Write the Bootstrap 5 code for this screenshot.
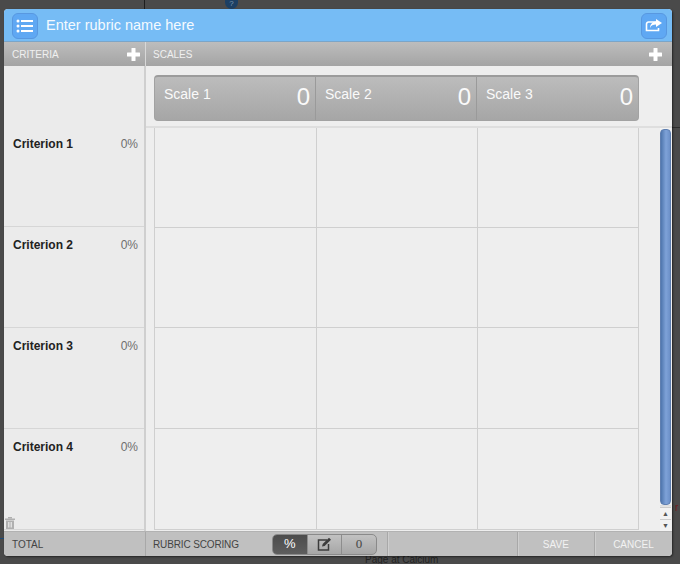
<!DOCTYPE html>
<html lang="en">
<head>
<meta charset="utf-8">
<title>Rubric</title>
<link href="https://cdn.jsdelivr.net/npm/bootstrap@5.3.0/dist/css/bootstrap.min.css" rel="stylesheet">
<style>
html,body{height:564px;overflow:hidden}
body{background:#4a4a4a;font-family:"Liberation Sans",Arial,sans-serif;position:relative}
.bgq{position:absolute;left:225px;top:0;width:13px;height:9px;border-radius:0 0 7px 7px;background:#1c3f63;color:#7f98b0;font-size:8px;line-height:8px;text-align:center}
.bgline{position:absolute;left:144px;top:0;width:1px;height:9px;background:#1e1e1e}
.bgline2{position:absolute;left:672px;top:127px;width:8px;height:1px;background:#2c2c2c}
.bgtxt{position:absolute;left:365px;top:554px;font-size:10px;color:#222;line-height:12px}
.bgred{position:absolute;left:675px;top:500px;font-size:10px;color:#6e1a1a}
.bgblue{position:absolute;left:0;top:538px;width:4px;height:1px;background:#1c4a78}
.dlg{position:relative;width:668px;height:547px;margin:9px 0 0 4px;border-radius:4px;overflow:hidden;background:#eee;box-shadow:1px 1px 2px rgba(0,0,0,.5)}
.topbar{height:33px;background:#76bcf5;padding:1px 5px 0 8px;color:#fff;border-bottom:1px solid #7ba5c8}
.ttl{font-size:14.5px;margin-left:8px;padding-top:1px;color:#f4faff}
.icbtn{width:26px;height:26px;border-radius:6px;background:#5fa8f3;border:1px solid #5898e0}
.hdrs{height:24px;background:linear-gradient(#bdbdbd,#a4a4a4);color:#f0f0f0;font-size:10px}
.leftw{width:142px;flex:none}
.seph{border-right:1px solid #d8d8d8}
.hl{padding:0 5px 0 8px}
.hr{padding:0 10px 0 7px}
.cols{height:465px;background:#eee}
.crit{background:#ebebeb;border-right:2px solid #cfcfcf;width:142px;flex:none;position:relative;display:grid;grid-template-rows:61px 100px 101px 101px 101px;align-content:start}
.critrow{border-bottom:1px solid #d6d6d6;padding:11px 6px 0 9px;font-size:12px;line-height:14px}
.critrow.firstrow{padding-top:10px}
.critrow b{color:#222;font-weight:700}
.critrow span{color:#6e6e6e}
.trash{position:absolute;left:1px;top:451px}
.mainp{flex:1;position:relative;min-width:0}
.scalearea{height:62px;padding:9px 0 0 8px;border-bottom:2px solid #dedede}
.scalebar{width:485px;height:46px;border-radius:4px;background:linear-gradient(#bcbcbc,#a6a6a6);border:1px solid #a2a2a2;border-top:2px solid #9c9c9c;overflow:hidden}
.sc{width:161px;flex:none;padding:7px 5px 0 9px;color:#fafafa;border-right:1px solid #9a9a9a;font-size:14px;line-height:20px}
.sc:last-child{border-right:0}
.sc strong{font-weight:400;font-size:24px;line-height:26px}
.gridp{padding:0 0 0 8px;height:403px}
.gr{width:485px;border:1px solid #cfcfcf;border-top:0;display:grid;grid-template-columns:162px 161px 160px;grid-template-rows:100px 100px 101px 100px}
.gc{border-right:1px solid #cfcfcf;border-bottom:1px solid #cfcfcf}
.gc:nth-child(3n){border-right:0}
.gc:nth-last-child(-n+3){border-bottom:0}
.sbar{position:absolute;right:1px;top:62px;width:11px;height:403px;display:flex;flex-direction:column;background:#f4f4f4}
.sth{height:376px;margin-top:1px;border-radius:4px;background:linear-gradient(90deg,#4f76ad,#7ea2d8 55%,#6c90c8);border:1px solid #5f7fb0;flex:none}
.sgap{flex:1;background:linear-gradient(#ddd,#f6f6f6 6px)}
.sarr{height:12px;font-size:7px;line-height:12px;text-align:center;color:#555;background:#f2f2f2;border-top:1px solid #ccc}
.foot{height:25px;background:#c0c0c0;border-top:1px solid #b2b2b2;font-size:10px;color:#444}
.fl{padding-left:8px;border-right:1px solid #a8a8a8;height:100%;width:142px}
.fr{padding-left:7px;flex:none;letter-spacing:-.14px}
.tog{width:105px;height:21px;border-radius:5px;border:1px solid #8a8a8a;background:linear-gradient(#c2c2c2,#a6a6a6);overflow:hidden;margin-left:33px}
.tog>div{flex:1 1 0;border-right:1px solid #8d8d8d;height:100%}
.tog>div:last-child{border-right:0}
.tog .on{background:linear-gradient(#4c4c4c,#5e5e5e);color:#fff;font-size:13px}
.tog .zero{font-size:13px;color:#444;font-family:"Liberation Serif",serif}
.fsep{border-left:1px solid #a8a8a8;box-shadow:inset 1px 0 0 #cecece;height:100%;color:#f2f2f2}
.f1{width:130px;margin-left:10px}
.f2{width:77px}
.f3{flex:1}
</style>
</head>
<body>
<div class="bgq">?</div><div class="bgline"></div><div class="bgline2"></div><div class="bgtxt">Page at Calcium</div><div class="bgred">r</div><div class="bgblue"></div>
<div class="dlg d-flex flex-column">
  <div class="topbar d-flex align-items-center">
    <div class="icbtn d-flex align-items-center justify-content-center">
      <svg width="18" height="14" viewBox="0 0 18 14" fill="#fff"><circle cx="2" cy="2" r="1.5"/><circle cx="2" cy="7" r="1.5"/><circle cx="2" cy="12" r="1.5"/><rect x="5" y="1" width="12" height="2"/><rect x="5" y="6" width="12" height="2"/><rect x="5" y="11" width="12" height="2"/></svg>
    </div>
    <div class="ttl flex-grow-1">Enter rubric name here</div>
    <div class="icbtn d-flex align-items-center justify-content-center">
      <svg width="18" height="14" viewBox="0 0 18 14" fill="none"><path d="M11 3H3.500A2 2 0 0 0 1.500 5v6.500h12V9" stroke="#fff" stroke-width="1.600"/><path d="M11 0l6 4-6 4V5.600C8 5.600 6 6.600 5 9 5 5.500 7.500 2.800 11 2.600z" fill="#fff"/></svg>
    </div>
  </div>
  <div class="hdrs d-flex">
    <div class="leftw hl d-flex align-items-center justify-content-between seph">
      <span>CRITERIA</span>
      <svg width="13" height="13" viewBox="0 0 13 13" fill="#fff"><rect x="4.500" width="4" height="13" rx=".5"/><rect y="4.500" width="13" height="4" rx=".5"/></svg>
    </div>
    <div class="flex-grow-1 hr d-flex align-items-center justify-content-between">
      <span>SCALES</span>
      <svg width="13" height="13" viewBox="0 0 13 13" fill="#fff"><rect x="4.500" width="4" height="13" rx=".5"/><rect y="4.500" width="13" height="4" rx=".5"/></svg>
    </div>
  </div>
  <div class="cols d-flex">
    <div class="crit">
      <div></div>
      <div class="critrow firstrow d-flex justify-content-between"><b>Criterion 1</b><span>0%</span></div>
      <div class="critrow d-flex justify-content-between"><b>Criterion 2</b><span>0%</span></div>
      <div class="critrow d-flex justify-content-between"><b>Criterion 3</b><span>0%</span></div>
      <div class="critrow d-flex justify-content-between"><b>Criterion 4</b><span>0%</span></div>
      <svg class="trash" width="10" height="12" viewBox="0 0 10 12" fill="#b0b0b0"><rect x="0" y="1.500" width="10" height="1.500"/><rect x="3" y="0" width="4" height="1.500"/><path d="M1 3.500h8V12H1zM3 5v5.500h.8V5zM4.600 5v5.500h.8V5zM6.200 5v5.500H7V5z" fill-rule="evenodd"/></svg>
    </div>
    <div class="mainp">
      <div class="scalearea">
        <div class="scalebar d-flex">
          <div class="sc d-flex justify-content-between"><span>Scale 1</span><strong>0</strong></div>
          <div class="sc d-flex justify-content-between"><span>Scale 2</span><strong>0</strong></div>
          <div class="sc d-flex justify-content-between"><span>Scale 3</span><strong>0</strong></div>
        </div>
      </div>
      <div class="gridp">
        <div class="gr">
          <div class="gc"></div><div class="gc"></div><div class="gc"></div>
          <div class="gc"></div><div class="gc"></div><div class="gc"></div>
          <div class="gc"></div><div class="gc"></div><div class="gc"></div>
          <div class="gc"></div><div class="gc"></div><div class="gc"></div>
        </div>
      </div>
      <div class="sbar"><div class="sth"></div><div class="sgap"></div><div class="sarr">&#9650;</div><div class="sarr">&#9660;</div></div>
    </div>
  </div>
  <div class="foot d-flex align-items-center">
    <div class="fl d-flex align-items-center">TOTAL</div>
    <div class="fr">RUBRIC SCORING</div>
    <div class="tog d-flex">
      <div class="on d-flex align-items-center justify-content-center">%</div>
      <div class="d-flex align-items-center justify-content-center">
        <svg width="15" height="14" viewBox="0 0 15 14" fill="none"><path d="M10 3H1.500v10h10V7" stroke="#3c3c3c" stroke-width="1.500"/><path d="M5 9.500l.7-2.500L12 .8 14 2.800 7.600 9z" fill="#3c3c3c"/></svg>
      </div>
      <div class="zero d-flex align-items-center justify-content-center">0</div>
    </div>
    <div class="fsep f1"></div>
    <div class="fsep f2 d-flex align-items-center justify-content-center">SAVE</div>
    <div class="fsep f3 d-flex align-items-center justify-content-center">CANCEL</div>
  </div>
</div>
</body>
</html>
